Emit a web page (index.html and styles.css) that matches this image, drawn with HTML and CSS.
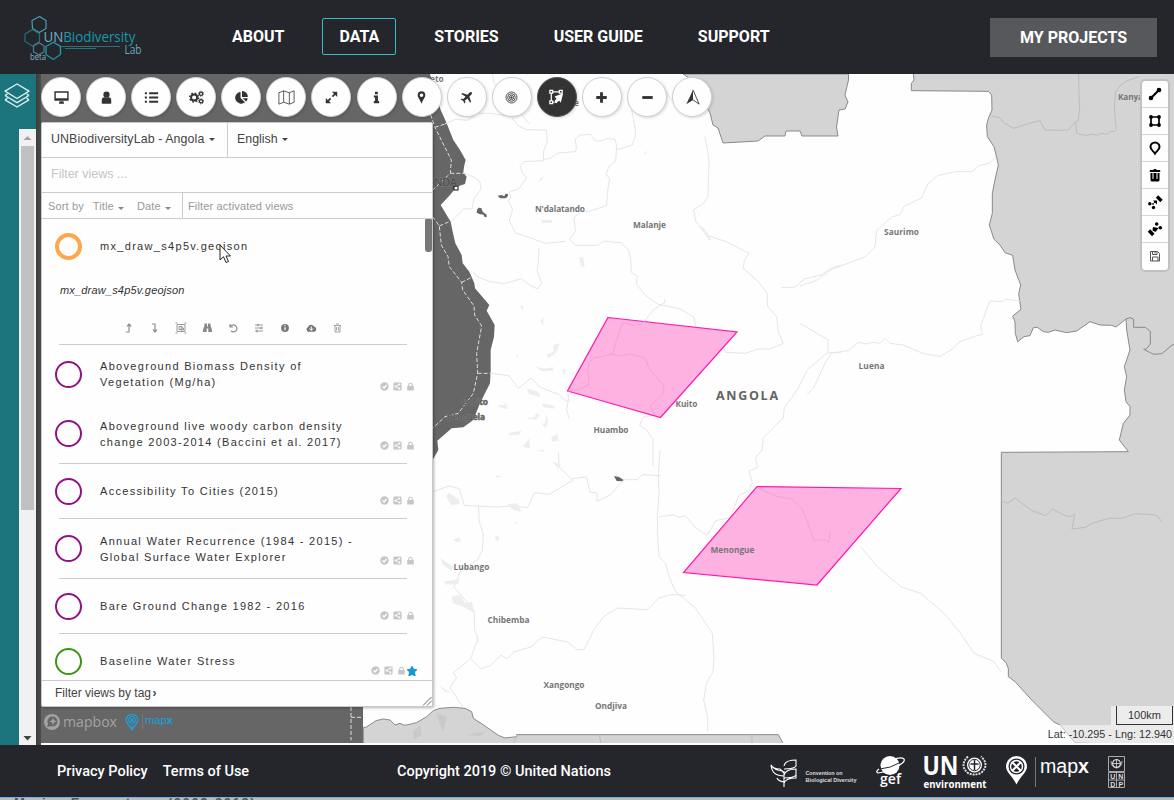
FILE: index.html
```html
<!DOCTYPE html>
<html lang="en">
<head>
<meta charset="utf-8">
<title>UN Biodiversity Lab</title>
<link rel="stylesheet" href="styles.css">
</head>
<body>
<svg class="defs" width="0" height="0">
  <symbol id="check" viewBox="0 0 9 9"><circle cx="4.500" cy="4.500" r="4.200" fill="currentColor"/><path d="M2.500 4.400 4 6l2.600-3" fill="none" stroke="#fff" stroke-width="1.200"/></symbol>
  <symbol id="share" viewBox="0 0 9 9"><rect x=".4" y=".4" width="8.200" height="8.200" rx="1.300" fill="currentColor"/><path d="M6.400 2.400 2.600 4.500l3.800 2.100" fill="none" stroke="#fff" stroke-width=".8"/><g fill="#fff"><circle cx="6.400" cy="2.400" r="1"/><circle cx="2.600" cy="4.500" r="1"/><circle cx="6.400" cy="6.600" r="1"/></g></symbol>
  <symbol id="lock" viewBox="0 0 9 9"><rect x="1.200" y="4" width="6.600" height="4.500" rx=".6" fill="currentColor"/><path d="M2.700 4.200V3a1.800 1.800 0 0 1 3.600 0v1.200" fill="none" stroke="currentColor" stroke-width="1.100"/></symbol>
  <symbol id="star" viewBox="0 0 10 10"><path d="M5 .2 6.500 3.200l3.300.5-2.400 2.300.8 3.800L5 8.500 1.800 9.800l.8-3.800L.2 3.700l3.300-.5z" fill="#1595d3" stroke="#1595d3" stroke-width="1"/></symbol>
</svg>

<header class="header">
  <svg class="logo" width="124" height="54" viewBox="22 12 124 54">
    <g fill="none" stroke-width="1.200">
      <path d="M32 20.500 39.500 16.500l6.500 4v8l-6.800 4-6.700-4z" stroke="#4e9cae"/>
      <path d="m25 34 7.500-4.500 7 4.500v7.500l-7 4.500-7.500-4.500z" stroke="#20707c"/>
      <path d="m33.500 46 5.500-3.200 5 3v6l-5.200 3-5.300-3z" stroke="#4b7f90"/>
      <path d="m46 46.500 7.500-4.300 7 4.300v8l-7.200 5-7.300-5z" stroke="#1d98a4" stroke-width="1.400"/>
      <path d="M61 46.500h59M65 48.500h31" stroke="#28717d"/>
    </g>
    <text x="43.500" y="41.500" class="logo-name" textLength="92" lengthAdjust="spacingAndGlyphs"><tspan fill="#6fb0c8">UN</tspan><tspan fill="#169aa7">Biodiversity</tspan></text>
    <text x="124.500" y="54" class="logo-lab" textLength="17" lengthAdjust="spacingAndGlyphs">Lab</text>
    <text x="30" y="60" class="logo-beta" textLength="16" lengthAdjust="spacingAndGlyphs">beta</text>
  </svg>
  <nav class="nav">
    <a class="nav-item">ABOUT</a>
    <a class="nav-item nav-active">DATA</a>
    <a class="nav-item">STORIES</a>
    <a class="nav-item">USER GUIDE</a>
    <a class="nav-item">SUPPORT</a>
  </nav>
  <a class="projects">MY PROJECTS</a>
</header>

<main class="main">
  <aside class="rail">
    <div class="rail-top">
      <svg width="26" height="26" viewBox="0 0 26 26" fill="none" stroke="#d9eff0" stroke-width="1.400" stroke-linejoin="round"><path d="M13 1 25 8.200 13 15.500 1 8.200z"/><path d="m1 12.500 12 7.200 12-7.200M1 16.800 13 24l12-7.200M1 12.500l2.500-1.600M25 12.500l-2.500-1.600M1 16.800l2.500-1.600M25 16.800l-2.500-1.600"/></svg>
    </div>
    <div class="scroll">
      <svg width="17" height="17" viewBox="0 0 17 17"><path d="M4.500 11 8.500 7l4 4z" fill="#a3a3a3"/></svg>
      <div class="scroll-thumb"></div>
      <svg class="scroll-down" width="17" height="14" viewBox="0 0 17 14"><path d="m4.500 5 4 4.500 4-4.500z" fill="#444"/></svg>
    </div>
  </aside>

  <section class="stage">
    <svg class="map" width="1138" height="669" viewBox="36 74 1138 669">
      <rect x="36" y="74" width="1138" height="669" fill="#fefefe"/>
      <g class="geo">
        <g transform="translate(420 70) scale(.33333)">
          <path class="sea" d="M-1160 12H30L62 120 80 160 100 210 120 240 137 270 132 290 130 308 140 320 135 342 110 350 90 375 62 405 92 455 98 485 106 520 125 555 128 580 148 605 163 640 165 655 208 705 200 722 224 765 222 800 212 840 212 900 210 940 180 1000 160 1050 130 1072 95 1075 52 1112 55 1140 38 1170-171 1740V2020H-1160z"/>
          <path class="sea" d="M233 377l12-2 8 4 3-7 7-1 1 8-7 6H240zM171 420l4-7 9 1 4 11 12 9v8l-6-1-4-7-12-2-8-4z"/>
          <path class="seadash" d="M20 100 45 172 94 270 91 310 38 360M38 440 58 468 64 525 84 560 88 590 125 637 128 660 162 708 164 735 185 768 170 850 173 910 160 970 115 1030 75 1040 38 1075M45 172l30-10M91 310h45M58 468l34-15M125 637l30-15M173 910h40M-207 1911v100M-207 1942h38"/>
          <path class="province" d="M75 162l32-14 35 3 30-21 40 0 62 10 20 27 25 12 60 1 3 35-11 27-1 28 24-7 20-14 52-4 3-10-3-28 15-12 30-2 15 20 20-1 14-6 25 2 5 20-3 45-19 14-10 25 11 15-7 40-2 40-55 18-25 0-18 19 4 40-18 25 20 17h65l20-13 50 6 22 20 7 28 2 40 18 12-2 25 27 33 35 25 70 15 40 25 10 50 7 30 8 25 20 15 20-15 20-30 5 0 3 30 60 3 40-13h35l40-17-15-35-5-45-27-30-2-40-26-35-45-40 3-25 15-20-70-35-60-20-30-40-8-35 30-20 14-20 3-110-8-50-4-20M1083 652h40l30-25 50-12 30-20 30-10M635 120l13 70-11 35-50 15M372 272l-60 3-12 12 8 25 13 10-25 35-28 8 5 18-8 10 13 25-10 35 20 37 28 8 60 22 60-6M357 535l-2 45-4 20 14 40-13 17-25-13-22-18-53 15-45-7-37-15-10-13M130 308l35 15 15 12 3 22-22 30-5 30-25-1-38 40M213 910l53 7 30 38 37-31 28 28 57 22 20 20 14-5M735 687l-2 12-33 20-25 33-18 14-40-10-20 62-20 35-65 12-12 15 10 50-16 28-50 5 2 25-6 30 8 30M590 850l60 4 30 10 2 30 50 50-5 25-40 35 20 30-38 8-10 25 20 12 20 30v80M1140 760l85 50-2 38h40M1223 848l-60 50-30 60-40 55-3 30-60 60-5 40M218 12l5 30 25 20 80 100M740 65l20 35"/>
          <path class="terrain" d="M355 355l5-30 13-7-15 20zM365 450h32v9h-32zM478 560l12 4 4 27-12-4zM830 415l8 23-3-2zM835 465l18 10 22 35-9 1-15-25zM378 855l22-10v-20l20-5-12 28-22 17zM345 888l25 8 30-4v10l-36 2zM425 895l15 6-9 15zM320 955l35 10 5 16-32-9zM365 1000l40 8-5 8-30-5zM365 1065l10-5 5-25 5 20-8 17zM395 1100l17-8 3 20-20 3zM232 1005h30l-14-13 18 25-22-3zM270 1088l35-6-8 12-32 2zM315 1045l28-3 5-12 12 4-12 15zM300 705l10 3-2 18zM360 753l10-12v25zM432 978l23-13 2 8zM670 250l14-8-8 12zM285 855l10 3-2 6zM308 1130l20-25 3 30z"/>
          <rect x="102" y="349" width="12" height="11" fill="#fff" stroke="#111" stroke-width="3"/>
        </g>
        <path class="land" d="M683 74l9 6 18 33 3 12 5 3 5 15 17-1 18-1 7-5h20l1-5h14l2 5h36l-1.500-9 2.500-17 6-1 3-7-3-7 3.500-15v-6z"/>
        <g transform="translate(800 70) scale(.33333)">
          <path class="land" d="M340 10 342 30 334 40V62L565 64 575 75 576 120 566 143 560 165 562 200 582 230 590 262 595 285 585 330 577 370 577 430 568 465 582 508 600 525 615 548 638 556 645 600 662 645 656 672 663 718 638 738 645 755 646 790 653 815 672 800 690 797 700 773 712 772 730 785 745 787 765 780 800 788 830 783 870 755 900 765 935 766 948 771 978 747 980 780 990 840 973 890 980 920 973 960 978 995 990 1010 990 1035 970 1060 958 1110 985 1145 604 1147V1765L618 1778 625 1795V1820L645 1835 695 1890 760 1955 780 1965 825 2018 1130 2030V10z"/>
          <path class="border" d="M978 747l12-4 11 4v25l35 0 15 12v38l-12 15-8 1 20 10 10 5 25-2 30-26 10-2"/>
          <path class="inner" d="M575 138l25 5 12 16 28 16 45-14 35-9 15 28 40 1 30-1 22-26 3 35 15 5 15 2 15-4 15 4 15-6 18 3 7-8 14-1 5-7-3-22-3-40 4-50 15-20 20-13 35-12M836 12l1 55 2 50-5 40M604 1292l20 8 20-16 53 38 40 15 20-20 35 18 17 5 15-7-8 44 40-5 20-12 50-15 40 0 40-14 35 2 30 3 15 20"/>
          <path class="province" d="M587 262l-20 18-30 7-20 18h-50l-55 12-30 27-17 40-53 25-12 25-25 7-45 40-5 50-30 30-55 20-50 20-40 30-50 17M660 693l-40-5-15 7-35-2-12 30-16 45 5 25-20 5-50 18-20 22-37 21-50-8-60-26-40-5-15-15-15 15-20-3-20 5-25-5-30 25-50 7-20 30-15 35-20 40-18 20"/>
        </g>
        <g transform="translate(430 450) scale(.33333)">
          <path class="sea" d="M552 78l15 3 13 8v5l-20-1z"/>
          <path class="land" d="M-200 832h8l30-20 22-5 20 3 15 15 15-5 10 5h10L-40 818-10 800 10 782 30 775 70 772 105 775 125 785 130 805 165 828 205 856 225 864 260 860V854H1045L1062 885H-200z"/>
          <path class="inner" d="M260 855l-8 24M508 855l5 24M966 855v24"/>
          <path class="province" d="M690 0l-5 70 2 60-5 70 2 80 3 40 20 20 10 40 20 45 60 50 50 75 5 70-3 45-20 35-8 50 12 50v45M8 125l50-17 30 8 15 50 100 5 45-3 45 5 20-45 45 5 50-30 20-12-40-40-3-45M425 86l45-5 10 45 20 3 2 25 40-20 40-45 40 0 15-15 55 3M145 166l3 50 12 35-3 50-15 30-50 30-20 50 60 70 2 60 10 25-22 60 30 30 30-10 30-30 20 10 20-20 50-15 35-30 75 15 30 23 20 0 30-60 30-40 40-25 90 5 35-35 35-10 45 2M120 628l-50 40 10 15-20 30 40 60M687 200l45-5 15 7 20-5 25 32 40 28 25-45 45-10 25-67 30-12 10-25-10-35 25-10-5-30 20-25M1292 290l50 60 70 60 60 20 70 60 50 60 40 60 60 25 20 30"/>
          <path class="terrain" d="M48 140l8-12 30 20 4 14-25 4zM232 162l30-2 12 25-25-5zM195 270l2-15 10 5v12zM70 270l18-10 5 15-15 2zM30 325l40 25-8 12-25-20zM65 440l25-5 15 25 20-5 10 35-35-20-30-10zM40 395l50-8-5 15-35 2zM365 35l20 5v25l-5-15zM195 75l20 5-15 3zM25 705l40 25-20-5zM138 560l10 15-8 5zM320 0h22v6zM253 212l12 8-8 3z"/>
          <path fill="#c9c9c9" d="M20 790l30 10-10 45-12-25zM110 855l60-12-20 15zM-50 845l20-20 5 30-25 15z"/>
        </g>
      </g>
      <g class="drawn">
        <path d="M608 317.500 737 332 660.500 417.500 567.500 391z"/>
        <path d="M757 486.500 901 488.500 817 585 683.500 572.500z"/>
      </g>
      <path class="overroad" d="M612.500 354.500l4-14 6-18 10 3 8-1 5-4M568 391l12-2 9-5-1-13 1-9 5-4 18-4 8 2 10-2 15 4 5 12 14 16-1 8-13 12 5 9M758 488l18 8 16 3 10 10 5 12 7 20 6-1 6 0 3 3 1-12"/>
      <g class="labels">
        <text x="430" y="82">eto</text>
        <text x="535" y="212" textLength="50">N'dalatando</text>
        <text x="633" y="228" textLength="33">Malanje</text>
        <text x="884" y="235" textLength="35">Saurimo</text>
        <text x="858.500" y="369" textLength="26">Luena</text>
        <text x="675.500" y="407" textLength="22">Kuito</text>
        <text x="593.500" y="433" textLength="35">Huambo</text>
        <text x="710.500" y="553" textLength="44">Menongue</text>
        <text x="453.500" y="570" textLength="36">Lubango</text>
        <text x="487.500" y="623" textLength="42">Chibemba</text>
        <text x="543.500" y="688" textLength="41">Xangongo</text>
        <text x="595" y="709" textLength="32">Ondjiva</text>
        <text x="1118" y="100" textLength="33">Kanyam</text>
        <text x="462" y="405" textLength="26" class="coast">Lobito</text>
        <text x="447" y="420" textLength="38" class="coast">Benguela</text>
        <text x="574" y="106">e</text>
        <text x="434" y="186" class="luanda" textLength="23">NDA</text>
        <text x="716" y="400" class="country" textLength="62">ANGOLA</text>
      </g>
    </svg>

    <div class="workspace">
      <div class="toolbar">
        <button class="tool"><svg viewBox="0 0 20 20"><path d="M2.500 3.500h15v10h-15zM8 14h4l.8 2.600H7.200z" fill="#333"/><path d="M4 5h12v5.800H4z" fill="#fff"/></svg></button>
        <button class="tool"><svg viewBox="0 0 20 20" fill="#333"><circle cx="10" cy="7" r="3.300"/><path d="M5 16v-3q0-3 3-3.200 2 1.400 4 0 3 .2 3 3.200v3q0 .5-.7.500H5.700Q5 16.500 5 16z"/></svg></button>
        <button class="tool"><svg viewBox="0 0 20 20" stroke="#333" stroke-width="2"><path d="M7.500 5.500H17M7.500 10H17M7.500 14.500H17M3 5.500h2.200M3 10h2.200M3 14.500h2.200"/></svg></button>
        <button class="tool"><svg viewBox="0 0 20 20" fill="none" stroke="#333"><circle cx="7.500" cy="10" r="3.200" stroke-width="2"/><circle cx="7.500" cy="10" r="4.700" stroke-width="1.400" stroke-dasharray="1.850 1.840"/><circle cx="14.800" cy="6" r="1.700" stroke-width="1.300"/><circle cx="14.800" cy="6" r="2.700" stroke-dasharray="1.060 1.060"/><circle cx="14.800" cy="14" r="1.700" stroke-width="1.300"/><circle cx="14.800" cy="14" r="2.700" stroke-dasharray="1.060 1.060"/></svg></button>
        <button class="tool"><svg viewBox="0 0 20 20" fill="#333"><path d="M9 4v6.500l4.700 4.600A6.300 6.300 0 1 1 9 4z"/><path d="M10.500 3.200a6 6 0 0 1 6.200 6.300h-6.200zM11.200 10.700h5.300q-.3 2.300-1.700 3.600z"/></svg></button>
        <button class="tool"><svg viewBox="0 0 20 20" fill="none" stroke="#444" stroke-width=".9"><path d="m2 5 5-2 6 2 5-2v12l-5 2-6-2-5 2zM7 3v12M13 5v12"/></svg></button>
        <button class="tool"><svg viewBox="0 0 20 20"><path d="m6 14 3-3m2-2 3-3" stroke="#333" stroke-width="1.800"/><path d="M4 16v-5.500L9.500 16zM16 4v5.500L10.500 4z" fill="#333"/></svg></button>
        <button class="tool"><svg viewBox="0 0 20 20" fill="#333"><path d="M8.400 4h3v2.600h-3zM7.200 8h4.300v5.800h1.300V16H7.200v-2.200h1.300V10H7.200z"/></svg></button>
        <button class="tool"><svg viewBox="0 0 20 20"><path d="M10 3.500a4 4 0 0 1 4 4C14 10 11.500 12 10 16.500 8.500 12 6 10 6 7.500a4 4 0 0 1 4-4zm0 2.200a1.900 1.900 0 1 0 0 3.800 1.900 1.900 0 0 0 0-3.800z" fill="#333" fill-rule="evenodd"/></svg></button>
        <button class="tool"><svg viewBox="0 0 20 20"><path d="M15.500 4.500q-1-1-2.500.5L11 7 5.500 5.200l-1 1L9 9l-2.300 2.500-2.200-.3-.8.800 2.700 1.500 1.500 2.700.8-.8-.2-2.200L11 11l2.800 4.500 1-1L13 9l2-2q1.500-1.500.5-2.500z" fill="#333"/></svg></button>
        <button class="tool"><svg viewBox="0 0 20 20" fill="none" stroke="#333" stroke-width=".9"><circle cx="10" cy="10" r="5.800"/><circle cx="10" cy="10" r="4"/><circle cx="10" cy="10" r="2.300"/><circle cx="10" cy="10" r=".8" fill="#333"/></svg></button>
        <button class="tool tool-on"><svg viewBox="0 0 20 20" fill="none" stroke="#fff" stroke-width="1.300"><path d="M3 2.500h3v3H3zM13 2.500h3v3h-3zM3 13.500h3v3H3zM6 4h7M4.500 5.500v8M6 15h2"/><path d="M17 5.500 8 9l2 2.200q-2 1-2 4.300l2 .5q1-1.500 3-2.500l1.500 2z" fill="#fff" stroke="none"/></svg></button>
        <button class="tool"><svg viewBox="0 0 20 20" stroke="#333" stroke-width="3"><path d="M4.500 10h11M10 4.500v11"/></svg></button>
        <button class="tool"><svg viewBox="0 0 20 20" stroke="#333" stroke-width="3"><path d="M4.500 10h11"/></svg></button>
        <button class="tool"><svg viewBox="0 0 20 20"><path d="M10.500 2v10.500L3.500 17z" fill="#333"/><path d="m10.500 2 6.500 15-6.500-4.500" fill="none" stroke="#333" stroke-width=".9"/></svg></button>
      </div>

      <div class="panel">
        <div class="panel-head">
          <div class="project">UNBiodiversityLab - Angola <i class="caret"></i></div>
          <div class="language">English <i class="caret"></i></div>
        </div>
        <div class="search">Filter views ...</div>
        <div class="sort">
          <div class="sort-keys"><span>Sort by</span><span>Title <i class="caret low"></i></span><span>Date <i class="caret low"></i></span></div>
          <div class="sort-filter">Filter activated views</div>
        </div>
        <div class="views">
          <div class="thumb"></div>
          <article class="view view-open">
            <div class="view-row">
              <span class="ring ring-open"></span>
              <h3 class="title">mx_draw_s4p5v.geojson</h3>
            </div>
            <p class="desc">mx_draw_s4p5v.geojson</p>
            <svg class="actions" width="220" height="12" viewBox="0 0 220 12" fill="none" stroke="#8e8e8e" stroke-width="1.200">
              <path d="M2 10h3V3M3 4.500 5 2l2.200 2.500M28 2h3v7M29 7.500l2 2.500 2-2.500"/>
              <path d="M53 2.500h8v7h-8zM51.500 1h2M60.500 1h2M51.500 11h2M60.500 11h2M55 4.500h3v3h-3zM56.500 6h3v2h-3" stroke-width=".9"/>
              <path d="M80.500 1.500h2.500v3h1v-3h2.500v2l1.500 4.500v2h-3.700v-3.500h-1.600V10H79V8l1.500-4.500z" fill="#888" stroke="none"/>
              <path d="M106 2v3h3M106.500 4.500a3.500 3.500 0 1 1 .5 4.500"/>
              <path d="M131 3h8M131 6h8M131 9h8" stroke-width=".9"/><path d="M134 1.800v2.400M137 4.800v2.400M133 7.800v2.400"/>
              <circle cx="161" cy="6" r="3.900" fill="#777" stroke="none"/><path d="M161 5.200v3M161 3v1.200" stroke="#fff"/>
              <path d="M184 9.700a2.600 2.600 0 0 1 0-4.700 3.200 3.200 0 0 1 6-.5 2.700 2.700 0 0 1 .5 5.200z" fill="#777" stroke="none"/><path d="M187.300 4.500V8M185.500 6.500l1.800 2 1.800-2" stroke="#fff" stroke-width="1"/>
              <path d="M210 3.500h7M211 3.500V10h5V3.500M212 2h3M212.500 5v3.500M214.500 5v3.500" stroke-width=".8"/>
            </svg>
          </article>
          <hr class="rule">
          <article class="view view-tall"><span class="ring"></span><h3 class="title high-title">Aboveground Biomass Density of<br>Vegetation (Mg/ha)</h3><div class="tags"><svg><use href="#check"/></svg><svg><use href="#share"/></svg><svg><use href="#lock"/></svg></div></article>
          <article class="view view-tall"><span class="ring"></span><h3 class="title low-title">Aboveground live woody carbon density<br>change 2003-2014 (Baccini et al. 2017)</h3><div class="tags"><svg><use href="#check"/></svg><svg><use href="#share"/></svg><svg><use href="#lock"/></svg></div></article>
          <hr class="rule">
          <article class="view"><span class="ring"></span><h3 class="title">Accessibility To Cities (2015)</h3><div class="tags"><svg><use href="#check"/></svg><svg><use href="#share"/></svg><svg><use href="#lock"/></svg></div></article>
          <hr class="rule">
          <article class="view view-tall"><span class="ring"></span><h3 class="title">Annual Water Recurrence (1984 - 2015) -<br>Global Surface Water Explorer</h3><div class="tags"><svg><use href="#check"/></svg><svg><use href="#share"/></svg><svg><use href="#lock"/></svg></div></article>
          <hr class="rule">
          <article class="view"><span class="ring"></span><h3 class="title">Bare Ground Change 1982 - 2016</h3><div class="tags"><svg><use href="#check"/></svg><svg><use href="#share"/></svg><svg><use href="#lock"/></svg></div></article>
          <hr class="rule">
          <article class="view"><span class="ring ring-green"></span><h3 class="title">Baseline Water Stress</h3><div class="tags tags-star"><svg><use href="#check"/></svg><svg><use href="#share"/></svg><svg><use href="#lock"/></svg><svg class="star"><use href="#star"/></svg></div></article>
        </div>
        <div class="tagbar"><span>Filter views by tag <b>›</b></span><svg width="10" height="10" viewBox="0 0 10 10" stroke="#444" stroke-width=".8"><path d="M1 9.500 9.500 1M5 9.500 9.500 5"/></svg></div>
      </div>

      <div class="brand">
        <svg width="76" height="18" viewBox="0 0 76 18"><circle cx="9" cy="9" r="8" fill="#a3a3a3"/><circle cx="9.500" cy="8.500" r="5" fill="#666"/><path d="m10 4.500 1 2.800 3 1.200-3 1-1 3-1-3-2.800-1L9 7.300z" fill="#a3a3a3"/><path d="m4 14 1.500-4.500 3 3.500z" fill="#666"/><text x="20" y="14" class="mapbox" textLength="54" lengthAdjust="spacingAndGlyphs">mapbox</text></svg>
        <svg width="52" height="18" viewBox="0 0 52 18"><path d="M8 1.300a5.800 5.800 0 0 1 5.800 5.800C13.800 10.500 9.800 13 8 17 6.200 13 2.200 10.500 2.200 7.100A5.800 5.800 0 0 1 8 1.300z" fill="none" stroke="#1b9fdc" stroke-width="1.300"/><circle cx="8" cy="7" r="3.600" fill="none" stroke="#1b9fdc"/><path d="m5.500 4.500 5 5m0-5-5 5M8 12v4" stroke="#1b9fdc" stroke-width="1.200"/><path d="M18.500 1v16" stroke="#777"/><text x="21" y="10.500" class="mapx" textLength="28" lengthAdjust="spacingAndGlyphs">map<tspan font-weight="700">x</tspan></text></svg>
      </div>
    </div>

    <div class="sidebar-right">
      <div class="draw">
        <span><svg viewBox="0 0 20 20"><path d="m6 14 8-8" stroke="#000" stroke-width="2.200"/><circle cx="6" cy="14" r="2.300"/><circle cx="14" cy="6" r="2.300"/></svg></span>
        <span><svg viewBox="0 0 20 20"><path d="M6 6h8v8H6z" fill="none" stroke="#000" stroke-width="1.700"/><circle cx="6" cy="6" r="1.900"/><circle cx="14" cy="6" r="1.900"/><circle cx="6" cy="14" r="1.900"/><circle cx="14" cy="14" r="1.900"/></svg></span>
        <span><svg viewBox="0 0 20 20"><path d="M10 4.500a4.500 4.500 0 0 1 4.500 4.500c0 3-3 4-4.500 6.500C8.500 13 5.500 12 5.500 9A4.500 4.500 0 0 1 10 4.500z" fill="none" stroke="#000" stroke-width="2"/></svg></span>
        <span><svg viewBox="0 0 20 20"><path d="M4.800 5h3.400l.8-1h2l.8 1h3.400v2H4.800zM5.500 8h2v6h1V8h3v6h1V8h2v7q0 1.500-1.500 1.500H7Q5.500 16.500 5.500 15z"/><path d="M9.500 8v6h1V8zM6.500 14h7v2h-7z"/></svg></span>
        <span><svg viewBox="0 0 20 20"><path d="m12 4.500 4.500 4.500" stroke="#000" stroke-width="3.400"/><circle cx="4.800" cy="11.800" r="1.700"/><circle cx="8.500" cy="15.500" r="1.700"/><path d="m7.500 12.500 3-3" stroke="#000" stroke-width="1.600" stroke-dasharray="1.500 1"/><path d="M8 8.500h4v4z"/></svg></span>
        <span><svg viewBox="0 0 20 20"><path d="M4 11.500 8.300 16" stroke="#000" stroke-width="3.400"/><circle cx="11.700" cy="5" r="1.800"/><circle cx="15.300" cy="8.700" r="1.800"/><path d="m8 8 5.500 1-3 4-3-1.500z"/></svg></span>
        <span><svg viewBox="0 0 20 20" fill="none" stroke="#555" stroke-width="1"><path d="M5.500 4.500h7l2 2v7.500h-9zM7.500 4.500v3h4.500v-3M7.500 14v-4h5.500v4M10 5v1.500"/></svg></span>
      </div>
      <div class="map-info">
        <div class="scale"><span>100km</span></div>
        <div class="coords">Lat: -10.295 - Lng: 12.940</div>
      </div>
    </div>
    <svg class="cursor" width="13" height="20" viewBox="0 0 13 20"><path d="M1 1v15l3.500-3.300L7 18.500l2.500-1L7 12h4.500z" fill="#fff" stroke="#222"/></svg>
  </section>
</main>

<footer class="footer">
  <div class="foot-links"><a>Privacy Policy</a><a>Terms of Use</a></div>
  <div class="copyright">Copyright 2019 © United Nations</div>
  <svg class="partners" width="360" height="36" viewBox="768 755 360 36" fill="none">
    <path d="M784 787V771M784 782q-6-1-7-4M784 776q-12 0-13-11 4 6 12 6M771 765q2 4 9 4l4 4M784 766q1-6 12-6v6q-2 3-12 3M784 775q2-6 12-6v6q-2 3-12 3M784 783q2-5 12-5v-5" stroke="#fff" stroke-width="1.100"/>
    <text x="805.500" y="774.500" class="cbd" textLength="37" lengthAdjust="spacingAndGlyphs">Convention on</text>
    <text x="805.500" y="782" class="cbd" textLength="51" lengthAdjust="spacingAndGlyphs">Biological Diversity</text>
    <circle cx="890" cy="765.500" r="9.500" fill="#fff"/>
    <path d="M879 769q-4 3-1 4 8-1 18-6 10-5 8-8-2-2-8-.5" stroke="#fff" stroke-width="1.200"/>
    <path d="M880 769q11-1 19-6" stroke="#25262b"/>
    <text x="880" y="784" class="gef" textLength="21" lengthAdjust="spacingAndGlyphs">gef</text>
    <text x="922.500" y="775" class="un" textLength="36" lengthAdjust="spacingAndGlyphs">UN</text>
    <text x="923.500" y="787.500" class="unenv" textLength="63" lengthAdjust="spacingAndGlyphs">environment</text>
    <path d="M968 756.500q-9 9 0 16.500 6 3 13 0 9-8 0-16.500" stroke="#ddd" stroke-width="2" stroke-dasharray="2 1"/>
    <circle cx="974.500" cy="765" r="7.500" fill="#fff"/><circle cx="974.500" cy="765" r="5.700" stroke="#25262b"/><path d="M974.500 760v10M970.500 764h8" stroke="#25262b" stroke-width="1.500"/>
    <path d="M1016.500 756a10.500 10.500 0 0 1 10.500 10.500c0 6-7 10-10.500 18-3.500-8-10.500-12-10.500-18a10.500 10.500 0 0 1 10.500-10.500z" fill="#fff"/><circle cx="1016.500" cy="766.500" r="8" fill="#25262b"/><circle cx="1016.500" cy="766.500" r="6" stroke="#fff" stroke-width="1.500"/><path d="m1012 762 9 9m0-9-9 9" stroke="#fff" stroke-width="2"/>
    <path d="M1035.500 757v30" stroke="#777"/>
    <text x="1040" y="773" class="foot-mapx" textLength="49" lengthAdjust="spacingAndGlyphs">map<tspan font-weight="700">x</tspan></text>
    <path d="M1108.500 756.500h16v15h-16zM1108.500 772.500h16v15h-16zM1116.500 772.500v15M1108.500 780h16" stroke="#aaa"/>
    <circle cx="1116.500" cy="763.500" r="4" stroke="#fff"/><path d="M1112 763.500h9M1116.500 759v9M1111 761q0 6 5.500 7 5.500-1 5.500-7" stroke="#ddd" stroke-width=".8"/>
    <g class="undp"><text x="1110.200" y="779">U</text><text x="1118.200" y="779">N</text><text x="1110.200" y="787">D</text><text x="1118.400" y="787">P</text></g>
  </svg>
</footer>
<div class="below"><span>Marine Ecosystems (2009-2019)</span></div>
</body>
</html>
```
FILE: styles.css
```css
* { box-sizing: border-box; }
body {
  margin: 0;
  height: 800px;
  overflow: hidden;
  display: flex;
  flex-direction: column;
  font-family: "Liberation Sans", Arial, sans-serif;
  background: #fff;
}
.defs { position: absolute; }

.header {
  flex: none;
  height: 74px;
  display: flex;
  align-items: center;
  background: #25262b;
  padding: 0 17px 0 22px;
  font-family: Roboto, sans-serif;
}
.logo { margin-top: 4px; }
.logo-name, .logo-lab, .logo-beta { font-family: "Open Sans", sans-serif; }
.logo-name { font-size: 14.5px; }
.logo-lab { font-size: 12px; fill: #65a9bd; }
.logo-beta { font-size: 8.5px; fill: #8ab4c0; }
.nav { display: flex; gap: 21px; margin-left: 69px; margin-top: -2px; }
.nav-item {
  height: 37px;
  line-height: 35px;
  padding: 0 16px;
  border: 1px solid transparent;
  border-radius: 2px;
  color: #fff;
  font-size: 16px;
  font-weight: 700;
  white-space: nowrap;
}
.nav-active { border-color: #35bccb; }
.projects {
  margin-left: auto;
  width: 167px;
  height: 39px;
  line-height: 39px;
  text-align: center;
  color: #fff;
  background: #57585c;
  font-size: 16px;
  font-weight: 700;
}

.main { flex: none; height: 671px; display: flex; }
.rail { width: 36px; background: #1c757c; display: flex; flex-direction: column; }
.rail-top { height: 55px; padding: 9px 0 0 4px; }
.scroll {
  flex: 1;
  width: 17px;
  margin-left: 19px;
  background: #f1f1f1;
  display: flex;
  flex-direction: column;
}
.scroll svg { flex: none; }
.scroll-thumb { height: 364px; margin: 0 2px; background: #c1c1c1; }
.scroll-down { margin-top: auto; }

.stage { position: relative; flex: 1; display: flex; justify-content: space-between; overflow: hidden; }
.map { position: absolute; inset: 0; }
.geo path { vector-effect: non-scaling-stroke; }
.sea { fill: #666; }
.seadash { fill: none; stroke: #ddd; stroke-width: 1; stroke-dasharray: 4 2; }
.land { fill: #d4d4d4; stroke: #8a8a8a; stroke-width: 1; }
.border { fill: none; stroke: #8a8a8a; }
.inner { fill: none; stroke: #bcbcbc; }
.province { fill: none; stroke: #e6e6ea; }
.terrain { fill: #eceef0; }
.drawn path { fill: #fdb2e1; stroke: #ff18ae; stroke-width: 1.2; }
.overroad { fill: none; stroke: #efa4d3; }
.labels { font: 700 8.3px "Open Sans", sans-serif; fill: #767676; }
.labels .coast { paint-order: stroke; stroke: #888; stroke-width: .6px; fill: #606060; }
.labels .luanda { font-size: 11px; font-weight: 600; fill: #505050; paint-order: stroke; stroke: #828282; stroke-width: .8px; }
.labels .country { font-size: 12.5px; font-weight: 700; fill: #636363; }

.workspace {
  position: relative;
  width: 680px;
  padding: 3px 0 0 5px;
  display: flex;
  flex-direction: column;
  background: linear-gradient(90deg, #3c3c3c, #4d4d4d) 0 0 / 5px 100% no-repeat;
}
.toolbar { display: flex; gap: 5.08px; height: 45px; }
.tool {
  flex: none;
  width: 40px;
  height: 40px;
  padding: 0;
  border: 1px solid #cfcfd4;
  border-radius: 50%;
  background: #fefefe;
  display: grid;
  place-items: center;
  box-shadow: 1px 1px 3px rgba(0, 0, 0, .15);
}
.tool svg { width: 19px; height: 19px; }
.tool-on { background: #333; border-color: #555; }

.panel {
  width: 392px;
  height: 585px;
  border: 1px solid #c9c9c9;
  border-radius: 2px;
  background: #fefefe;
  display: flex;
  flex-direction: column;
  box-shadow: 1px 1px 3px rgba(0, 0, 0, .3);
  color: #444;
}
.panel-head { display: flex; height: 35px; border-bottom: 1px solid #ccc; font-size: 12.4px; line-height: 32px; white-space: nowrap; }
.project { width: 186px; padding-left: 9px; border-right: 1px solid #ccc; letter-spacing: .1px; }
.language { padding-left: 9px; }
.caret { display: inline-block; margin-left: 1px; border: 3px solid transparent; border-top-color: #444; border-bottom: 0; vertical-align: 2px; }
.search { height: 35px; line-height: 32px; padding-left: 9px; border-bottom: 1px solid #ccc; font-size: 12.5px; color: #c5c5c5; }
.sort { display: flex; height: 26px; border-bottom: 1px solid #ccc; font-size: 11px; line-height: 26px; color: #999; }
.sort-keys { display: flex; gap: 9px; width: 141px; padding-left: 6px; border-right: 1px solid #ccc; white-space: nowrap; letter-spacing: .13px; }
.sort-keys span:last-child { margin-left: 4px; }
.low { border-top-color: #888; vertical-align: 0; margin-left: 1px; }
.sort-filter { padding-left: 5px; letter-spacing: .15px; }

.views { position: relative; height: 461px; overflow: hidden; }
.thumb { position: absolute; right: 0; top: -1px; width: 7px; height: 34px; border-radius: 3px; background: #777; }
.view { height: 54px; display: flex; align-items: center; padding: 0 14px 0 13px; }
.view-tall { height: 59px; }
.view-open { height: 125px; display: block; padding-top: 14px; }
.view-row { display: flex; align-items: center; }
.view-row .title { margin-top: -1px; }
.ring { flex: none; width: 27px; height: 27px; border: 2px solid #901184; border-radius: 50%; margin-right: 18px; }
.ring-open { border: 4px solid #ffa54b; }
.ring-green { border-color: #3c9414; }
.title { flex: 1; margin: 0; font-size: 11px; line-height: 16px; font-weight: 400; letter-spacing: 1.31px; color: #333; white-space: nowrap; }
.low-title { padding-top: 1px; }
.high-title { padding-bottom: 1px; }
.desc { margin: 23px 0 0 5px; font-size: 11px; line-height: 14px; letter-spacing: .18px; font-style: italic; color: #333; }
.actions { display: block; margin: 25px 0 0 69px; }
.rule { height: 1px; margin: 0 25px 0 17px; border: 0; background: #ccc; }
.tags { align-self: flex-end; display: flex; gap: 4px; height: 9px; margin: 0 3px 13px 0; color: #c6c6c6; }
.tags svg { width: 9px; height: 9px; }
.tags-star { margin-right: 1px; }
.tags .star { width: 10px; height: 10px; margin-left: -3px; }
.tagbar {
  flex: 1;
  display: flex;
  justify-content: space-between;
  padding-left: 13px;
  border-top: 1px solid #ccc;
  font-size: 12px;
  line-height: 25px;
}
.tagbar svg { align-self: flex-end; }
.tagbar b { margin-left: -2px; }

.brand { display: flex; gap: 5px; padding: 6px 0 0 2px; }
.mapbox { font: 14px "Open Sans", sans-serif; fill: #a3a3a3; }
.mapx { font: 11px "Liberation Sans", sans-serif; fill: #1b9fdc; }

.sidebar-right { position: relative; display: flex; flex-direction: column; align-items: flex-end; justify-content: space-between; padding: 5px 0 2px; }
.draw {
  width: 30px;
  margin-right: 4.5px;
  border: 2px solid #c1c1c4;
  border-radius: 5px;
  background: #fefefe;
  overflow: hidden;
}
.draw span { display: grid; place-items: center; height: 27px; border-bottom: 1px solid #d5d5d5; }
.draw span:last-child { border-bottom: 0; }
.draw svg { width: 20px; height: 20px; }
.map-info { display: flex; flex-direction: column; align-items: flex-end; color: #333; }
.scale { width: 63px; padding: 0 1px 0 5px; background: rgba(255, 255, 255, .55); font-size: 11px; }
.scale span { display: block; height: 19px; line-height: 18px; text-align: center; border: 1px solid #333; border-top: 0; }
.coords { height: 18px; line-height: 18px; padding: 0 2px; font-size: 10.8px; background: rgba(255, 255, 255, .5); }
.cursor { position: absolute; left: 183px; top: 170px; }

.footer {
  flex: none;
  height: 52px;
  display: flex;
  align-items: center;
  padding-left: 57px;
  background: #25262b;
  color: #fff;
  font: 500 14.5px Roboto, sans-serif;
  white-space: nowrap;
}
.foot-links { display: flex; gap: 15px; width: 340px; }
.copyright { width: 371px; }
.partners { margin-top: 4px; overflow: visible; }
.cbd { font: 700 6px "Liberation Sans", sans-serif; fill: #ddd; }
.gef { font: 600 14px "Open Sans", sans-serif; fill: #fff; }
.un { font: 700 26px "Open Sans", sans-serif; fill: #fff; }
.unenv { font: 700 10.5px "Open Sans", sans-serif; fill: #fff; }
.foot-mapx { font: 20px "Liberation Sans", sans-serif; fill: #fff; }
.undp { font: 700 7px "Liberation Sans", sans-serif; fill: #ddd; }
.below { flex: none; height: 3px; overflow: hidden; border-top: 1px solid #6fb3ee; background: #bbb; padding-left: 14px; color: #555; font-size: 13px; font-weight: 700; line-height: 9px; letter-spacing: 1.6px; }
```
